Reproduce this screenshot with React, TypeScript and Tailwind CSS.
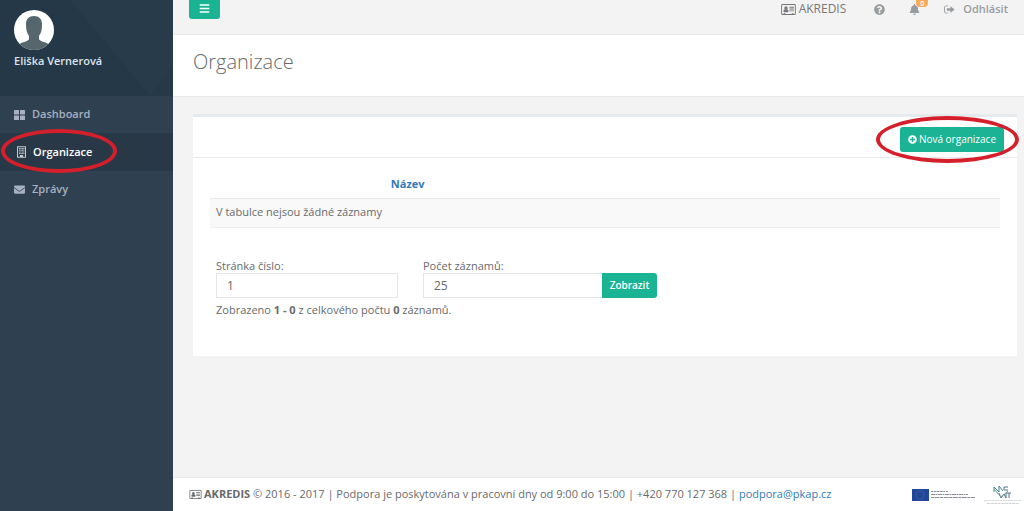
import { FaBars, FaBell, FaEnvelope, FaPlusCircle, FaQuestionCircle } from "react-icons/fa";

function CardIcon({ className = "" }: { className?: string }) {
  return (
    <svg viewBox="0 0 32 24" className={className} fill="currentColor" aria-hidden="true">
      <path fillRule="evenodd" d="M3 0h26a3 3 0 0 1 3 3v18a3 3 0 0 1-3 3H3a3 3 0 0 1-3-3V3a3 3 0 0 1 3-3Zm0 2a1 1 0 0 0-1 1v18a1 1 0 0 0 1 1h2v-2h4v2h14v-2h4v2h2a1 1 0 0 0 1-1V3a1 1 0 0 0-1-1Z" />
      <path d="M10.500 5a3.700 3.700 0 0 1 3.500 4c0 2.200-1.600 4-3.500 4S7 11.200 7 9a3.700 3.700 0 0 1 3.500-4ZM7.500 12c1.700 2 4.300 2 6 0 2 .3 2.500 2 2.500 4 0 1.200-.8 2-2 2H7c-1.200 0-2-.8-2-2 0-2 .5-3.700 2.500-4ZM18 6h10v2H18zM18 10h10v2H18zM18 14h10v2H18z" />
    </svg>
  );
}

function GridIcon({ className = "" }: { className?: string }) {
  return (
    <svg viewBox="0 0 22 20" className={className} fill="currentColor" aria-hidden="true">
      <rect width="10" height="9" rx="1" />
      <rect x="12" width="10" height="9" rx="1" />
      <rect y="11" width="10" height="9" rx="1" />
      <rect x="12" y="11" width="10" height="9" rx="1" />
    </svg>
  );
}

function BuildingIcon({ className = "" }: { className?: string }) {
  return (
    <svg viewBox="0 0 22 28" className={className} fill="currentColor" aria-hidden="true">
      <path fillRule="evenodd" d="M1 0h20a1 1 0 0 1 1 1v26a1 1 0 0 1-1 1H1a1 1 0 0 1-1-1V1a1 1 0 0 1 1-1Zm1.500 2.500v23H7v-4h8v4h4.500v-23Z" />
      <path d="M5 4.500h2.500V7H5zM8.500 4.500H11V7H8.500zM12 4.500h2.500V7H12zM15.500 4.500H18V7h-2.500zM5 8.500h2.500V11H5zM8.500 8.500H11V11H8.500zM12 8.500h2.500V11H12zM15.500 8.500H18V11h-2.500zM5 12.500h2.500V15H5zM8.500 12.500H11V15H8.500zM12 12.500h2.500V15H12zM15.500 12.500H18V15h-2.500zM5 16.500h2.500V19H5zM8.500 16.500H11V19H8.500zM12 16.500h2.500V19H12zM15.500 16.500H18V19h-2.500z" />
    </svg>
  );
}

function SignOutIcon({ className = "" }: { className?: string }) {
  return (
    <svg viewBox="0 0 24 20" className={className} fill="currentColor" aria-hidden="true">
      <path d="M9 1v2H5a3 3 0 0 0-3 3v8a3 3 0 0 0 3 3h4v2H5a5 5 0 0 1-5-5V6a5 5 0 0 1 5-5Z" />
      <path d="M14 2.500 23.500 10 14 17.500V13H7a1 1 0 0 1-1-1V8a1 1 0 0 1 1-1h7Z" />
    </svg>
  );
}

function Avatar() {
  return (
    <svg viewBox="0 0 40 40" className="size-10" role="img" aria-label="Eliška Vernerová">
      <clipPath id="avatar">
        <circle cx="20" cy="20" r="20" />
      </clipPath>
      <g clipPath="url(#avatar)">
        <path fill="#fff" d="M0 0h40v40H0z" />
        <path fill="#56666d" d="M20 6c5 0 8 3 8 8 0 6-1 9-3 12v3c1 3 8 3 11 6v5H4v-5c3-3 10-3 11-6v-3c-2-3-3-6-3-12 0-5 3-8 8-8Z" />
      </g>
    </svg>
  );
}

function Highlight({ className = "" }: { className?: string }) {
  return <span className={`pointer-events-none absolute rounded-[50%] border-4 border-[#d5202c] ${className}`} />;
}

function EuLogo() {
  const dots = Array.from({ length: 12 }, (_, i) => {
    const a = (i * Math.PI) / 6;
    return <circle key={i} cx={8 + 4 * Math.sin(a)} cy={6 - 4 * Math.cos(a)} r="0.4" fill="#8f9a82" />;
  });
  return (
    <svg viewBox="0 0 64 12" className="h-3 w-16" role="img" aria-label="Evropská unie">
      <path fill="#21479a" d="M0 0h17v12H0z" />
      {dots}
      <g stroke="#8b8e9a" strokeWidth="1">
        <path strokeDasharray="2 .6 3 .5" d="M19 2.500h17" />
        <path strokeDasharray="4 .5 2 .5" d="M19 5.500h37" />
        <path strokeDasharray="3 .5 5 .6" d="M19 8.500h44" />
      </g>
    </svg>
  );
}

function MsmtLogo() {
  return (
    <svg viewBox="0 0 38 20" className="h-5 w-[38px]" role="img" aria-label="MŠMT">
      <g fill="none" strokeWidth="1">
        <path stroke="#3f8790" d="M10 7V2l5 5V1l4 5" />
        <path stroke="#55758c" d="M24 2h-4v3h4M15 8l2 5 3-4 2 4V8M22 8h5M25 8v5" />
        <path stroke="#6da597" d="m10 4 7 8 7-6" />
      </g>
      <g stroke="#d2d3d7" strokeWidth="1">
        <path strokeDasharray="2 .7" d="M0 15.500h38" />
        <path strokeDasharray="3 .6" d="M3 18.500h32" />
      </g>
    </svg>
  );
}

function Sidebar() {
  return (
    <aside className="w-[173px] shrink-0 bg-[#2f4050] font-semibold">
      <div className="relative h-24 overflow-hidden bg-[#263949] px-3.5 pt-2.5 text-[11px] leading-4 text-[#dfe4ed]">
        <svg viewBox="0 0 173 96" preserveAspectRatio="none" className="absolute inset-0 size-full" aria-hidden="true">
          <path fill="#243848" d="M0 0h70l80 96H0z" />
          <path fill="#273b4a" d="m70 0 80 96 23-30V0z" />
        </svg>
        <div className="relative">
          <Avatar />
          <p className="mt-[3px]">Eliška Vernerová</p>
        </div>
      </div>
      <nav className="text-[11px] text-[#a7b1c2]">
        <a href="#dashboard" className="flex h-[37px] items-center gap-[7px] px-3.5">
          <GridIcon className="h-2.5 w-[11px]" />
          Dashboard
        </a>
        <a href="#organizace" className="relative flex h-[38px] items-center gap-[7px] bg-[#293846] pl-[17px] text-white">
          <BuildingIcon className="h-3 w-[9px] text-[#c3c9d1]" />
          Organizace
          <Highlight className="-top-1 left-px h-11 w-[116px]" />
        </a>
        <a href="#zpravy" className="flex h-[37px] items-center gap-[7px] px-3.5">
          <FaEnvelope className="size-[11px]" />
          Zprávy
        </a>
      </nav>
    </aside>
  );
}

function TopBar() {
  return (
    <header className="flex h-[35px] items-start justify-between border-b border-[#e7eaec] pl-4 pr-4">
      <button type="button" aria-label="Menu" className="flex h-[19px] w-[31px] items-center justify-center rounded-b-[3px] bg-[#1ab394] pb-0.5 text-white">
        <FaBars className="size-[11px]" />
      </button>
      <div className="flex h-[18px] items-center text-xs text-[#999c9e]">
        <span className="flex items-center gap-[3px] text-[#777]">
          <CardIcon className="h-[11px] w-[15px]" />
          AKREDIS
        </span>
        <a href="#napoveda" aria-label="Nápověda" className="ml-7">
          <FaQuestionCircle className="size-[11px]" />
        </a>
        <a href="#upozorneni" aria-label="Upozornění" className="relative ml-6">
          <FaBell className="size-[11px]" />
          <span className="absolute -top-1 left-[7px] h-[7px] w-3 rounded-b-sm bg-[#f8ac59] text-center text-[7px] font-semibold leading-[7px] text-white">0</span>
        </a>
        <a href="#odhlasit" className="ml-6 flex items-center gap-2 text-[11px] font-semibold">
          <SignOutIcon className="h-[9px] w-[11px]" />
          Odhlásit
        </a>
      </div>
    </header>
  );
}

function OrganizationsPanel() {
  return (
    <section className="border-t-[3px] border-[#e7eaec] bg-white">
      <div className="flex h-[41px] items-end justify-end border-b border-[#e7eaec] pb-[5px] pr-[13px]">
        <div className="relative">
          <button type="button" className="flex h-[25px] items-center gap-0.5 rounded-[3px] bg-[#1ab394] px-2 text-[10px] text-white">
            <FaPlusCircle className="size-[9px]" />
            Nová organizace
          </button>
          <Highlight className="-bottom-[11px] -left-6 -right-[15px] -top-[11px]" />
        </div>
      </div>
      <div className="px-[17px] pb-[38px] pt-[13px]">
        <table className="w-full table-fixed text-left">
          <thead>
            <tr className="h-[27px] border-b border-[#e7e7e7]">
              <th className="w-[22%]" />
              <th className="pl-[7px] font-bold text-[#337ab7]">
                <a href="#nazev">Název</a>
              </th>
            </tr>
          </thead>
          <tbody>
            <tr className="h-[29px] border-b border-[#f0f0f0] bg-[#f9f9f9]">
              <td colSpan={2} className="px-1.5">V tabulce nejsou žádné záznamy</td>
            </tr>
          </tbody>
        </table>
        <form className="mt-[30px] flex gap-[25px] px-1.5" onSubmit={(e) => e.preventDefault()}>
          <div>
            <label htmlFor="page" className="block leading-[15px]">Stránka číslo:</label>
            <input id="page" defaultValue="1" className="h-[25px] w-[182px] border border-[#e5e6e7] bg-white px-2.5 text-xs" />
          </div>
          <div>
            <label htmlFor="count" className="block leading-[15px]">Počet záznamů:</label>
            <div className="flex">
              <input id="count" defaultValue="25" className="h-[25px] w-[179px] border border-r-0 border-[#e5e6e7] bg-white px-2.5 text-xs" />
              <button type="submit" className="h-[25px] w-[55px] rounded-r-[3px] bg-[#1ab394] text-[10px] font-semibold text-white">Zobrazit</button>
            </div>
          </div>
        </form>
        <p className="mt-1 px-1.5 leading-4">
          Zobrazeno <strong>1 - 0</strong> z celkového počtu <strong>0</strong> záznamů.
        </p>
      </div>
    </section>
  );
}

export default function App() {
  return (
    <div className="flex min-h-screen bg-[#f3f3f4] font-['Open_Sans','Noto_Sans',sans-serif] text-[11px] text-[#676a6c]">
      <Sidebar />
      <div className="flex min-w-0 flex-1 flex-col">
        <TopBar />
        <div className="flex h-[62px] items-center border-b border-[#e7eaec] bg-white px-5 pb-2">
          <h1 className="text-xl font-light">Organizace</h1>
        </div>
        <main className="py-[17px] pl-5 pr-[7px]">
          <OrganizationsPanel />
        </main>
        <footer className="mt-auto flex h-[34px] items-center justify-between border-t border-[#e7eaec] bg-white pl-4">
          <p className="flex items-center gap-0.5 whitespace-pre">
            <CardIcon className="h-[9px] w-[13px]" />
            <span>
              <strong>AKREDIS</strong> © 2016 - 2017 | Podpora je poskytována v pracovní dny od 9:00 do 15:00 | +420 770 127 368 |{" "}
              <a href="mailto:podpora@pkap.cz" className="text-[#337ab7]">podpora@pkap.cz</a>
            </span>
          </p>
          <div className="flex items-center gap-2 pr-0.5">
            <EuLogo />
            <MsmtLogo />
          </div>
        </footer>
      </div>
    </div>
  );
}
